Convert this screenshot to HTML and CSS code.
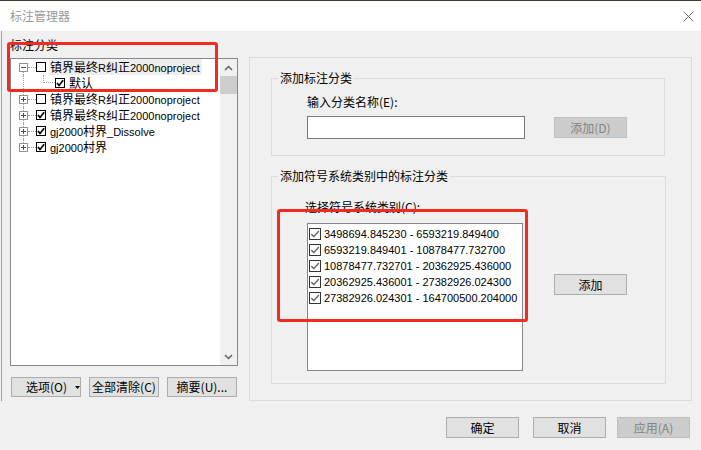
FILE: index.html
```html
<!DOCTYPE html>
<html lang="zh-CN">
<head>
    <meta charset="UTF-8">
    <title>标注管理器</title>
    <link rel="stylesheet" href="styles.css">
</head>
<body>
<div class="window">
    <div class="titlebar">
        <span class="title">标注管理器</span>
        <svg class="close" width="11" height="11" viewBox="0 0 11 11"><path d="M0.5 0.5 L10.5 10.5 M10.5 0.5 L0.5 10.5" stroke="#707070" stroke-width="1" fill="none"/></svg>
    </div>

    <div class="main">
        <div class="left">
            <div class="caption">标注分类</div>
            <div class="tree">
                <div class="tree-items">
                    <div class="node first">
                        <svg class="twisty" width="9" height="9" viewBox="0 0 9 9"><rect x="0.5" y="0.5" width="8" height="8" fill="#fff" stroke="#919191"/><path d="M2 4.5 H7" stroke="#3c4c7c"/></svg>
                        <span class="hline"></span>
                        <svg class="check" width="10" height="10" viewBox="0 0 10 10"><rect x="0.5" y="0.5" width="9" height="9" fill="#fff" stroke="#000"/></svg>
                        <span class="label selected"><span class="zh">镇界最终</span>R<span class="zh">纠正</span>2000noproject</span>
                    </div>
                    <div class="node child">
                        <span class="elbow"></span>
                        <svg class="check" width="10" height="10" viewBox="0 0 10 10"><rect x="0.5" y="0.5" width="9" height="9" fill="#fff" stroke="#000"/><path d="M2 5 L4 7.5 L8.2 2.2" fill="none" stroke="#000" stroke-width="1.7"/></svg>
                        <span class="label"><span class="zh">默认</span></span>
                    </div>
                    <div class="node">
                        <svg class="twisty" width="9" height="9" viewBox="0 0 9 9"><rect x="0.5" y="0.5" width="8" height="8" fill="#fff" stroke="#919191"/><path d="M2 4.5 H7 M4.5 2 V7" stroke="#3c4c7c"/></svg>
                        <span class="hline"></span>
                        <svg class="check" width="10" height="10" viewBox="0 0 10 10"><rect x="0.5" y="0.5" width="9" height="9" fill="#fff" stroke="#000"/></svg>
                        <span class="label"><span class="zh">镇界最终</span>R<span class="zh">纠正</span>2000noproject</span>
                    </div>
                    <div class="node">
                        <svg class="twisty" width="9" height="9" viewBox="0 0 9 9"><rect x="0.5" y="0.5" width="8" height="8" fill="#fff" stroke="#919191"/><path d="M2 4.5 H7 M4.5 2 V7" stroke="#3c4c7c"/></svg>
                        <span class="hline"></span>
                        <svg class="check" width="10" height="10" viewBox="0 0 10 10"><rect x="0.5" y="0.5" width="9" height="9" fill="#fff" stroke="#000"/><path d="M2 5 L4 7.5 L8.2 2.2" fill="none" stroke="#000" stroke-width="1.7"/></svg>
                        <span class="label"><span class="zh">镇界最终</span>R<span class="zh">纠正</span>2000noproject</span>
                    </div>
                    <div class="node">
                        <svg class="twisty" width="9" height="9" viewBox="0 0 9 9"><rect x="0.5" y="0.5" width="8" height="8" fill="#fff" stroke="#919191"/><path d="M2 4.5 H7 M4.5 2 V7" stroke="#3c4c7c"/></svg>
                        <span class="hline"></span>
                        <svg class="check" width="10" height="10" viewBox="0 0 10 10"><rect x="0.5" y="0.5" width="9" height="9" fill="#fff" stroke="#000"/><path d="M2 5 L4 7.5 L8.2 2.2" fill="none" stroke="#000" stroke-width="1.7"/></svg>
                        <span class="label">gj2000<span class="zh">村界</span>_Dissolve</span>
                    </div>
                    <div class="node last">
                        <svg class="twisty" width="9" height="9" viewBox="0 0 9 9"><rect x="0.5" y="0.5" width="8" height="8" fill="#fff" stroke="#919191"/><path d="M2 4.5 H7 M4.5 2 V7" stroke="#3c4c7c"/></svg>
                        <span class="hline"></span>
                        <svg class="check" width="10" height="10" viewBox="0 0 10 10"><rect x="0.5" y="0.5" width="9" height="9" fill="#fff" stroke="#000"/><path d="M2 5 L4 7.5 L8.2 2.2" fill="none" stroke="#000" stroke-width="1.7"/></svg>
                        <span class="label">gj2000<span class="zh">村界</span></span>
                    </div>
                </div>
                <div class="vscroll">
                    <div class="sb-btn">
                        <svg width="9" height="6" viewBox="0 0 9 6"><path d="M1 5 L4.5 1.5 L8 5" fill="none" stroke="#606060" stroke-width="1.5"/></svg>
                    </div>
                    <div class="sb-thumb"></div>
                    <div class="sb-track"></div>
                    <div class="sb-btn">
                        <svg width="9" height="6" viewBox="0 0 9 6"><path d="M1 1 L4.5 4.5 L8 1" fill="none" stroke="#606060" stroke-width="1.5"/></svg>
                    </div>
                </div>
            </div>
            <div class="left-buttons">
                <button class="btn btn-options">选项(O)<svg class="drop" width="5" height="3" viewBox="0 0 5 3"><path d="M0 0 H5 L2.5 3 Z" fill="#000"/></svg></button>
                <button class="btn">全部清除(C)</button>
                <button class="btn">摘要(U)...</button>
            </div>
        </div>

        <div class="panel">
            <fieldset class="group group-add">
                <legend>添加标注分类</legend>
                <div class="group-body">
                    <div class="field-label">输入分类名称(E):</div>
                    <div class="input-row">
                        <input type="text" class="name-input">
                        <button class="btn btn-wide disabled">添加(D)</button>
                    </div>
                </div>
            </fieldset>

            <fieldset class="group group-symbols">
                <legend>添加符号系统类别中的标注分类</legend>
                <div class="group-body symbols-body">
                    <div class="field-label">选择符号系统类别(C):</div>
                    <div class="list-row">
                        <div class="list-box">
                            <div class="item"><svg width="12" height="12" viewBox="0 0 12 12"><rect x="0.5" y="0.5" width="11" height="11" fill="#fff" stroke="#333"/><path d="M2.3 6 L4.8 8.6 L9.8 3" fill="none" stroke="#555" stroke-width="1.2"/></svg><span>3498694.845230 - 6593219.849400</span></div>
                            <div class="item"><svg width="12" height="12" viewBox="0 0 12 12"><rect x="0.5" y="0.5" width="11" height="11" fill="#fff" stroke="#333"/><path d="M2.3 6 L4.8 8.6 L9.8 3" fill="none" stroke="#555" stroke-width="1.2"/></svg><span>6593219.849401 - 10878477.732700</span></div>
                            <div class="item"><svg width="12" height="12" viewBox="0 0 12 12"><rect x="0.5" y="0.5" width="11" height="11" fill="#fff" stroke="#333"/><path d="M2.3 6 L4.8 8.6 L9.8 3" fill="none" stroke="#555" stroke-width="1.2"/></svg><span>10878477.732701 - 20362925.436000</span></div>
                            <div class="item"><svg width="12" height="12" viewBox="0 0 12 12"><rect x="0.5" y="0.5" width="11" height="11" fill="#fff" stroke="#333"/><path d="M2.3 6 L4.8 8.6 L9.8 3" fill="none" stroke="#555" stroke-width="1.2"/></svg><span>20362925.436001 - 27382926.024300</span></div>
                            <div class="item"><svg width="12" height="12" viewBox="0 0 12 12"><rect x="0.5" y="0.5" width="11" height="11" fill="#fff" stroke="#333"/><path d="M2.3 6 L4.8 8.6 L9.8 3" fill="none" stroke="#555" stroke-width="1.2"/></svg><span>27382926.024301 - 164700500.204000</span></div>
                        </div>
                        <button class="btn btn-wide btn-add">添加</button>
                    </div>
                </div>
            </fieldset>
        </div>
    </div>

    <div class="footer">
        <button class="btn btn-wide btn-ok">确定</button>
        <button class="btn btn-wide">取消</button>
        <button class="btn btn-wide disabled">应用(A)</button>
    </div>

    <!-- red annotation boxes drawn over the dialog -->
    <div class="mark mark-tree"></div>
    <div class="mark mark-list"></div>
</div>
</body>
</html>
```

FILE: styles.css
```css
* {
    box-sizing: border-box;
}

body {
    margin: 0;
    background-color: #f0f0f0;
    font-family: "Noto Sans CJK SC", sans-serif;
    font-size: 12px;
    line-height: 16px;
    color: #000;
}

.window {
    position: relative;
    width: 701px;
    height: 450px;
    overflow: hidden;
    background-color: #f0f0f0;
}

.titlebar {
    height: 31px;
    border-top: 1px solid #3d3d30;
    background-color: #fff;
    display: flex;
    align-items: center;
    justify-content: space-between;
    padding: 0 7px 0 10px;
}

.title {
    color: #999;
}

.main {
    display: flex;
    align-items: flex-start;
    height: 370px;
    margin-left: 1px;
    border-left: 1px solid #a0a0a0;
    padding-left: 8px;
}

/* left column: tree of label classes */
.left {
    width: 228px;
    flex: none;
    padding-top: 6px;
}

.tree {
    margin-top: 5px;
    height: 308px;
    border: 1px solid #828790;
    background-color: #fff;
    display: flex;
}

.tree-items {
    flex: 1;
}

.node {
    position: relative;
    height: 16px;
    display: flex;
    align-items: center;
    padding-left: 8px;
}

.node::before {
    content: "";
    position: absolute;
    left: 12px;
    top: 0;
    bottom: 0;
    border-left: 1px dotted #a0a0a0;
}

.node.first::before {
    top: 8px;
}

.node.last::before {
    bottom: 8px;
}

.twisty {
    position: relative;
    flex: none;
}

.hline {
    width: 8px;
    border-top: 1px dotted #a0a0a0;
    flex: none;
}

.child {
    padding-left: 32px;
}

.elbow {
    align-self: flex-start;
    width: 12px;
    height: 8px;
    border-left: 1px dotted #a0a0a0;
    border-bottom: 1px dotted #a0a0a0;
    flex: none;
}

.check {
    flex: none;
}

/* latin parts of the tree labels run narrower than the CJK ones */
.label {
    margin-left: 3px;
    padding: 0 2px 0 1px;
    height: 16px;
    line-height: 16px;
    white-space: nowrap;
    font-family: "Liberation Sans", "Noto Sans CJK SC", sans-serif;
    font-size: 11px;
}

.label .zh {
    font-family: "Noto Sans CJK SC", sans-serif;
    font-size: 12px;
}

.label.selected {
    background-color: #eeeeee;
}

.vscroll {
    width: 17px;
    background-color: #f0f0f0;
    display: flex;
    flex-direction: column;
}

.sb-btn {
    height: 17px;
    display: flex;
    align-items: center;
    justify-content: center;
}

.sb-thumb {
    height: 18px;
    background-color: #cdcdcd;
}

.sb-track {
    flex: 1;
}

.left-buttons {
    display: flex;
    gap: 8px;
    margin-top: 11px;
    padding-left: 1px;
}

/* buttons */
.btn {
    width: 70px;
    height: 20px;
    padding: 0;
    border: 1px solid #adadad;
    background-color: #e1e1e1;
    font: inherit;
    color: #000;
    white-space: nowrap;
    display: flex;
    align-items: center;
    justify-content: center;
}

.btn-wide {
    width: 73px;
    height: 21px;
}

.btn.disabled {
    background-color: #cccccc;
    border-color: #bfbfbf;
    color: #838383;
}

.btn-options {
    justify-content: flex-start;
    padding-left: 14px;
}

.drop {
    margin-left: 8px;
    flex: none;
}

/* right panel */
.panel {
    flex: none;
    width: 443px;
    height: 344px;
    margin-left: 11px;
    margin-top: 26px;
    border: 1px solid #dcdcdc;
    padding: 12px 0 0 21px;
}

.group {
    margin: 0;
    padding: 0;
    min-width: 0;
    border: 1px solid #dcdcdc;
    width: 394px;
}

.group legend {
    margin-left: 6px;
    padding: 0 2px;
    line-height: 16px;
}

.group-body {
    padding: 8px 0 16px 35px;
}

.input-row {
    display: flex;
    align-items: center;
    margin-top: 6px;
}

.name-input {
    width: 218px;
    height: 23px;
    margin: 0;
    border: 1px solid #7a7a7a;
    background-color: #fff;
}

.input-row .btn {
    margin-left: 29px;
}

.group-symbols {
    margin-top: 12px;
    width: 395px;
}

.symbols-body {
    padding: 15px 0 12px 33px;
}

.list-row {
    display: flex;
    align-items: flex-start;
    margin-top: 8px;
    padding-left: 2px;
}

.list-box {
    width: 216px;
    height: 148px;
    border: 1px solid #828790;
    background-color: #fff;
    padding: 2px 0 0 1px;
}

.item {
    height: 16px;
    display: flex;
    align-items: center;
    gap: 3px;
    font-family: "Liberation Sans", Arial, sans-serif;
    font-size: 11px;
    white-space: nowrap;
}

.btn-add {
    margin-left: 31px;
    margin-top: 51px;
}

.footer {
    display: flex;
    justify-content: flex-end;
    gap: 11px;
    margin-top: 16px;
    padding-right: 11px;
}

.btn-ok {
    margin-right: 3px;
}

/* annotation marks */
.mark {
    position: absolute;
    border: 3px solid #f52a1f;
    border-radius: 3px;
}

.mark-tree {
    left: 7px;
    top: 42px;
    width: 211px;
    height: 50px;
}

.mark-list {
    left: 277px;
    top: 209px;
    width: 251px;
    height: 113px;
}
```
